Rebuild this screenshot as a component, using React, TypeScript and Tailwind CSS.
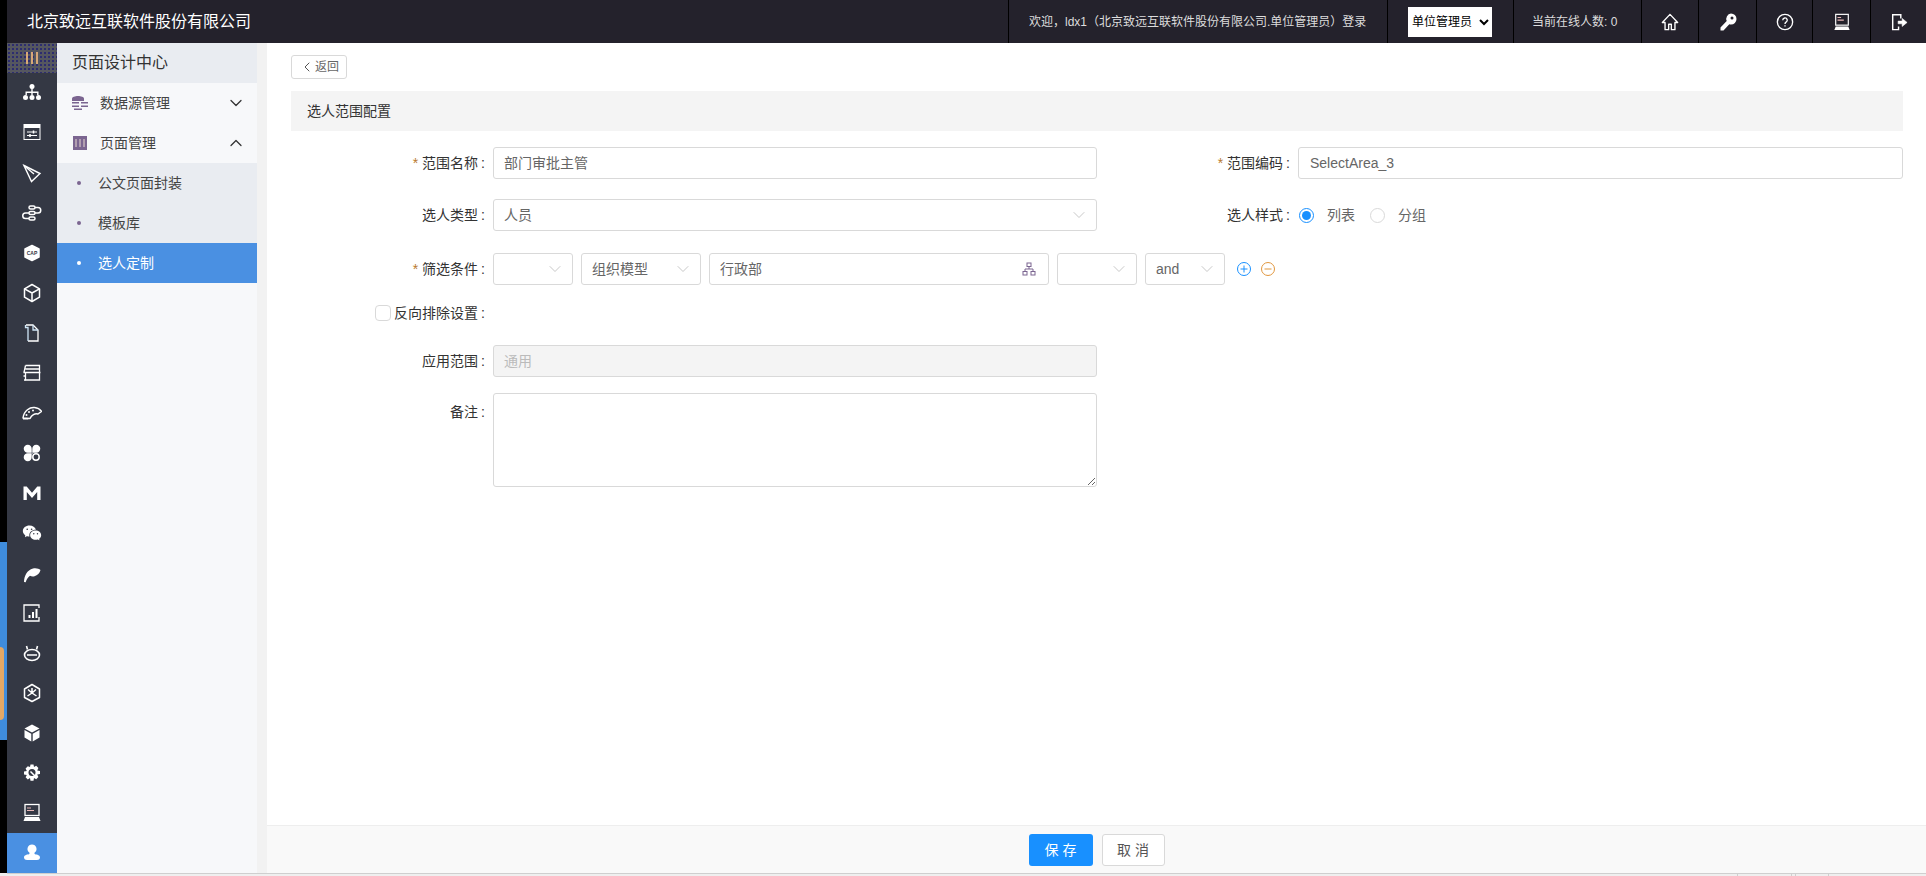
import { ChevronDown, ChevronLeft, ChevronUp } from 'lucide-react';
import { RiWechatFill } from 'react-icons/ri';
import type { ReactNode } from 'react';

const railIcons: ReactNode[] = [
  // org tree
  <g fill="#fff" key="a">
    <circle cx="10" cy="3.5" r="2.5" />
    <path d="M9.3 5h1.4v3.5h5.8V12h-1.4V10H10.7v2H9.3v-2H4.9v2H3.5V8.500h5.800z" />
    <circle cx="3.500" cy="14.500" r="2.500" />
    <circle cx="10" cy="14.500" r="2.500" />
    <circle cx="16.500" cy="14.500" r="2.500" />
  </g>,
  // settings card
  <g key="b">
    <rect x="1.500" y="1" width="17" height="16" fill="#fff" />
    <rect x="2.500" y="5" width="15" height="11" fill="#343844" />
    <path d="M5 9h10M5 12.500h10" stroke="#fff" strokeWidth="1.200" />
    <path d="M11.500 7.500v3M8 11v3" stroke="#fff" strokeWidth="1.500" />
  </g>,
  // paper plane
  <g key="c" fill="none" stroke="#fff" strokeWidth="1.400">
    <path d="M2 2.500 18 10.500 9.500 18.500z" />
    <path d="M2 2.500 12 11" />
  </g>,
  // flow
  <g key="d" fill="none" stroke="#fff" strokeWidth="1.500">
    <rect x="7" y="3" width="6" height="3" rx="1.500" />
    <rect x="7" y="8.500" width="6" height="3" rx="1.500" />
    <rect x="7" y="14" width="6" height="3" rx="1.500" />
    <path d="M13 4.500h3a2.500 2.500 0 0 1 0 5.500h-3M7 10H3.500a2.700 2.700 0 0 0 0 5.500H7" />
  </g>,
  // cap badge
  <g key="e">
    <path d="M10 2.500 17 6v8l-7 3.500L3 14V6z" fill="#fff" stroke="#fff" strokeLinejoin="round" strokeWidth="1.500" />
    <text x="10" y="11.800" textAnchor="middle" fontSize="5" fontWeight="700" fill="#343844" fontFamily="Liberation Sans, sans-serif">CAP</text>
  </g>,
  // box outline
  <g key="f" fill="none" stroke="#fff" strokeWidth="1.500" strokeLinejoin="round">
    <path d="M10 1.500 17.500 5.800v8.400L10 18.500l-7.500-4.300V5.800z" />
    <path d="M2.500 5.800 10 10l7.500-4.200M10 10v8.500" />
  </g>,
  // file
  <g key="g" fill="none" stroke="#fff" strokeWidth="1.300">
    <path d="M4 2h7l5 5v11H6" />
    <path d="M6 18V4.500H3.500V2M11 2v5h5" stroke="#cfe6f7" />
  </g>,
  // stacked storage
  <g key="h" fill="none" stroke="#fff" strokeWidth="1.300">
    <path d="M3.500 2.500h14v7h-14M1.500 9.500h17M3.500 9.500v7.500h14v-7.500" />
    <path d="M3.500 2.500 2 9.500M3.500 17h-1.500M1.500 13h2M17.500 6h-14" />
  </g>,
  // palette fan
  <g key="i">
    <path d="M1 15C2 7.500 8 4 12.500 4.500 15.500 4.800 18 6.200 19.500 8.300L16 11c-3-1-6.500 1-8 4.500z" fill="none" stroke="#fff" strokeWidth="1.500" strokeLinejoin="round" />
    <path d="M1 15h6l-.8 1.500H1z" fill="#fff" />
    <circle cx="7" cy="9" r="1" fill="#fff" />
    <circle cx="11" cy="7.500" r="1" fill="#fff" />
    <circle cx="4.500" cy="12" r="1" fill="#fff" />
  </g>,
  // clover
  <g key="j">
    <path d="M9.700 9.700H6a4 4 0 1 1 3.700-3.700zM10.300 9.700V6A4 4 0 1 1 14 9.700zM9.700 10.300V14A4 4 0 1 1 6 10.300z" fill="#fff" />
    <circle cx="14" cy="14" r="3.200" fill="none" stroke="#fff" strokeWidth="1.500" />
    <path d="M9 9h2v2H9z" fill="#9a9da6" />
  </g>,
  // M mark
  <path key="k" d="M1.500 3.500h3.200L10 9.800l5.300-6.300h3.200V17h-3.300V9L10 15 4.800 9v8H1.500z" fill="#fff" />,
  // wechat
  <g key="l" />,
  // feather
  <path key="m" d="M2 19c.2-6 3-12 9-13.500 3-.8 6 .2 7.500 1.500-.8 3-3 5.500-6 6.200-2 .5-3.500 0-4.500-.5-2 1.500-3.500 3.500-4.300 6.500z" fill="#fff" />,
  // report
  <g key="n">
    <path d="M17 14v4H2V2h15v3" fill="none" stroke="#fff" strokeWidth="1.300" />
    <path d="M6.500 12h2v3h-2zM10 9h2v6h-2zM13.500 6h2v9h-2z" fill="#fff" />
  </g>,
  // robot
  <g key="o" fill="none" stroke="#fff" strokeWidth="1.600">
    <ellipse cx="10" cy="12" rx="7.500" ry="5.500" />
    <path d="M5 12h10M5.500 6.500 4.500 3M14.500 6.500 15.500 3" />
  </g>,
  // hex snowflake
  <g key="p" fill="none" stroke="#fff" strokeWidth="1.500" strokeLinejoin="round">
    <path d="M10 1.500 17.500 6v8.500L10 18.500l-7.500-4V6z" />
    <path d="M10 10V5M10 10l4.500 3M10 10l-4.500 3M6 6.500l4 3.500 4-3.500" />
  </g>,
  // solid cube
  <g key="q">
    <path d="M10 1.500 17.500 5.500 10 9.500 2.500 5.500z" fill="#fff" />
    <path d="M2.500 7 9.300 10.700v7.800L2.500 14.500zM17.500 7l-6.800 3.700v7.800l6.800-4z" fill="#fff" />
  </g>,
  // gear with wrench
  <g key="r">
    <path d="M8.500 1.500h3l.5 2.500 2.200-1.200 2.200 2.200L15.200 7.500l2.800.5v3l-2.800.5 1.200 2.500-2.200 2.200-2.200-1.200-.5 2.800h-3L8 15l-2.200 1.500-2.200-2.200L4.800 12 2 11.500v-3l2.800-.5-1.200-2.500 2.200-2.200L8 4z" fill="#fff" />
    <circle cx="10" cy="9.500" r="3.500" fill="#343844" />
    <path d="M8.500 8.500l5 5" stroke="#fff" strokeWidth="1.500" />
  </g>,
  // laptop terminal
  <g key="s">
    <rect x="3" y="1.500" width="14" height="11" fill="none" stroke="#fff" strokeWidth="1.300" />
    <path d="M5 5h4M5 7.500h7" stroke="#e9b7b7" strokeWidth="1.200" />
    <path d="M3 14h14l1.500 4h-17z" fill="#fff" />
  </g>,
  // user
  <path key="t" d="M10 1.500a4.500 4.500 0 0 1 2.700 8.100c-.4.400-.4 1.400.3 1.700 2.300.5 5 .8 5 3.200 0 1.700-1.500 2.500-3 2.500H5c-1.500 0-3-.8-3-2.500 0-2.400 2.700-2.700 5-3.200.7-.3.700-1.300.3-1.700A4.500 4.500 0 0 1 10 1.500z" fill="#fff" />,
];

function Chevron() {
  return <ChevronDown className="w-5 h-5 text-[#bdbdbd]" strokeWidth={1} />;
}

function Field({ children, className = '' }: { children?: ReactNode; className?: string }) {
  return (
    <div className={`h-8 border border-[#d9d9d9] rounded-[3px] flex items-center justify-between pl-[10px] pr-[7px] text-[#666] ${className}`}>
      {children}
    </div>
  );
}

function Label({ text, required, className = '' }: { text: string; required?: boolean; className?: string }) {
  return (
    <div className={`h-8 flex items-center justify-end pr-2 text-[#333] whitespace-nowrap ${className}`}>
      {required && <span className="text-[#b97a2f] mr-1">*</span>}
      {text}
      <span className="ml-[3px]">:</span>
    </div>
  );
}

export default function App() {
  return (
    <div className="w-[1926px] h-[876px] flex overflow-hidden bg-[#efefef] text-sm font-['Liberation_Sans','Noto_Sans_CJK_SC',sans-serif]">
      {/* strip of the window behind */}
      <div className="w-[7px] h-[873px] shrink-0 bg-black flex flex-col pt-[542px]">
        <div className="h-[198px] bg-[#3f8cdc] pt-[105px]">
          <div className="h-[73px] w-1 bg-[#e2a765] rounded-r-sm" />
        </div>
      </div>

      <div className="flex-1 flex flex-col">
        <header className="h-[43px] shrink-0 bg-[#24222c] flex items-center text-white">
          <div className="w-[1001px] pl-5 text-base">北京致远互联软件股份有限公司</div>
          <div className="w-[379px] h-full border-l border-black flex items-center pl-5 text-xs text-[#ddd] whitespace-nowrap">
            欢迎，ldx1（北京致远互联软件股份有限公司.单位管理员）登录
          </div>
          <div className="w-[126px] h-full border-l border-black flex items-center pl-5">
            <select className="w-[84px] h-[30px] bg-white text-black text-xs">
              <option>单位管理员</option>
            </select>
          </div>
          <div className="w-[128px] h-full border-l border-black flex items-center pl-[18px] text-xs text-[#ddd] whitespace-nowrap">
            当前在线人数: 0
          </div>
          <div className="w-[57px] h-full border-l border-black flex items-center justify-center">
            <svg viewBox="0 0 20 20" className="w-[18px] h-[18px]" fill="none" stroke="#fff" strokeWidth="1.500">
              <path d="M10 1.500 1.500 10.500h3v8h4v-6h3v6h4v-8h3z" strokeLinejoin="round" />
            </svg>
          </div>
          <div className="w-[58px] h-full border-l border-black flex items-center justify-center">
            <svg viewBox="0 0 20 20" className="w-5 h-5" fill="#fff">
              <path d="M13 1.500a5.500 5.500 0 0 1 0 11c-.6 0-1.200-.1-1.700-.3L5.500 18.500H2.500v-3l6.200-6.400a5.500 5.500 0 0 1 4.300-7.600z" />
              <circle cx="14" cy="6" r="1.500" fill="#24222c" />
            </svg>
          </div>
          <div className="w-[56px] h-full border-l border-black flex items-center justify-center">
            <svg viewBox="0 0 20 20" className="w-[18px] h-[18px]" fill="none" stroke="#fff" strokeWidth="1.500">
              <circle cx="10" cy="10" r="8.500" />
              <path d="M7.500 8a2.500 2.500 0 1 1 3.700 2.200c-.8.500-1.200 1-1.200 2" />
              <path d="M10 13.500v1.500" />
            </svg>
          </div>
          <div className="w-[58px] h-full border-l border-black flex items-center justify-center">
            <svg viewBox="0 0 20 20" className="w-[18px] h-[18px]">
              <rect x="3" y="1.500" width="14" height="12" fill="none" stroke="#fff" strokeWidth="1.300" />
              <path d="M5 5h4M5 8h7" stroke="#e9b7b7" strokeWidth="1.300" />
              <path d="M3 15h14l1.500 4h-17z" fill="#fff" />
            </svg>
          </div>
          <div className="w-[56px] h-full border-l border-black flex items-center justify-center">
            <svg viewBox="0 0 20 20" className="w-[18px] h-[18px]" fill="none" stroke="#fff" strokeWidth="1.600">
              <path d="M12 6V2H3v16.500h6.500V15" />
              <path d="M9 9h4.500V6L19 10.500 13.500 15v-3H9z" fill="#fff" strokeWidth="0.600" />
            </svg>
          </div>
        </header>

        <div className="h-[830px] flex">
          {/* icon rail */}
          <nav className="w-[50px] shrink-0 bg-[#343844] flex flex-col">
            <div className="h-[30px] shrink-0 bg-[#55575f] bg-[radial-gradient(#2a2a70_0.7px,transparent_0.8px)] bg-[length:4px_4px] flex items-center justify-center gap-[3px]">
              <span className="w-0.5 h-3 bg-[#d8a878]" />
              <span className="w-0.5 h-3 bg-[#d8a878]" />
              <span className="w-0.5 h-3 bg-[#d8a878]" />
            </div>
            {railIcons.map((icon, i) => (
              <div key={i} className={`h-10 shrink-0 flex items-center justify-center ${i === 19 ? 'bg-[#4a90e2]' : ''}`}>
                {i === 11 ? (
                  <RiWechatFill className="w-5 h-5 text-white" />
                ) : (
                  <svg viewBox="0 0 20 20" className="w-5 h-5">{icon}</svg>
                )}
              </div>
            ))}
          </nav>

          {/* sub menu */}
          <aside className="w-[200px] shrink-0 bg-[#f7f8fa] text-[#444]">
            <div className="h-10 bg-[#e9ecf1] flex items-center pl-[15px] text-base text-[#333]">页面设计中心</div>
            <div className="h-10 flex items-center pl-[15px] pr-[11px]">
              <svg viewBox="0 0 16 14" className="w-4 h-[14px] mr-3">
                <path d="M0 2.500C0 1 3 0 6 0s6 1 6 2.500V5H0z" fill="#7b6590" />
                <path d="M0 6h7v1.500H0zM9 6h7v1.500H9zM0 9.500h7V11H0zM9 9.500h7V11H9zM2 12.500h8V14H2z" fill="#7b6590" />
              </svg>
              <span className="flex-1">数据源管理</span>
              <ChevronDown className="w-5 h-5 text-[#333]" strokeWidth={1.500} />
            </div>
            <div className="h-10 flex items-center pl-4 pr-[11px]">
              <svg viewBox="0 0 14 14" className="w-[14px] h-[14px] mr-[13px]">
                <rect width="14" height="14" fill="#7b6590" />
                <path d="M3 3v8M7 3v8M11 3v8" stroke="#e9d9d0" strokeWidth="1" />
              </svg>
              <span className="flex-1">页面管理</span>
              <ChevronUp className="w-5 h-5 text-[#333]" strokeWidth={1.500} />
            </div>
            <div className="h-10 bg-[#e9ecf1] flex items-center pl-[20px]">
              <span className="w-1 h-1 rounded-full bg-[#7b6590] mr-[17px]" />
              公文页面封装
            </div>
            <div className="h-10 bg-[#e9ecf1] flex items-center pl-[20px]">
              <span className="w-1 h-1 rounded-full bg-[#7b6590] mr-[17px]" />
              模板库
            </div>
            <div className="h-10 bg-[#4a90e2] text-white flex items-center pl-[20px]">
              <span className="w-1 h-1 rounded-full bg-white mr-[17px]" />
              选人定制
            </div>
          </aside>

          <div className="w-[10px] shrink-0 bg-[#f2f2f2]" />

          {/* main */}
          <main className="flex-1 bg-white flex flex-col">
            <div className="flex-1 pl-6 pt-3">
              <button className="w-[56px] h-6 border border-[#d9d9d9] rounded-[3px] flex items-center justify-center text-xs text-[#666]">
                <ChevronLeft className="w-4 h-4 text-[#555]" strokeWidth={1.500} />
                返回
              </button>
              <div className="mt-3 w-[1612px] h-10 bg-[#f4f4f4] flex items-center pl-4 text-[#333]">选人范围配置</div>

              <div className="mt-4 grid grid-cols-[202px_604px_201px_605px] items-start">
                <Label text="范围名称" required />
                <Field>部门审批主管</Field>
                <Label text="范围编码" required />
                <Field className="pl-[11px]">SelectArea_3</Field>
              </div>

              <div className="mt-5 grid grid-cols-[202px_604px_201px_605px] items-start">
                <Label text="选人类型" />
                <Field>
                  人员
                  <Chevron />
                </Field>
                <Label text="选人样式" />
                <div className="h-8 flex items-center pl-[1px] text-[#666]">
                  <span className="w-[15px] h-[15px] rounded-full border border-[#1890ff] flex items-center justify-center">
                    <span className="w-[9px] h-[9px] rounded-full bg-[#1890ff]" />
                  </span>
                  <span className="ml-[13px]">列表</span>
                  <span className="ml-[15px] w-[15px] h-[15px] rounded-full border border-[#d9d9d9]" />
                  <span className="ml-[13px]">分组</span>
                </div>
              </div>

              <div className="mt-[22px] flex items-center">
                <div className="w-[202px]">
                  <Label text="筛选条件" required />
                </div>
                <Field className="w-[80px]"><span /><Chevron /></Field>
                <Field className="w-[120px] ml-2">组织模型<Chevron /></Field>
                <Field className="w-[340px] ml-2">
                  行政部
                  <svg viewBox="0 0 14 14" className="w-[14px] h-[14px] mr-[5px]" fill="none" stroke="#7b6590" strokeWidth="1">
                    <rect x="5" y="1" width="4" height="3.500" />
                    <rect x="1" y="9.500" width="4" height="3.500" />
                    <rect x="9" y="9.500" width="4" height="3.500" />
                    <path d="M7 4.500V7M3 9.500V7h8v2.500" />
                  </svg>
                </Field>
                <Field className="w-[80px] ml-2"><span /><Chevron /></Field>
                <Field className="w-[80px] ml-2">and<Chevron /></Field>
                <svg viewBox="0 0 14 14" className="w-[14px] h-[14px] ml-3" fill="none" stroke="#1890ff" strokeWidth="1">
                  <circle cx="7" cy="7" r="6.500" />
                  <path d="M3.500 7h7M7 3.500v7" />
                </svg>
                <svg viewBox="0 0 14 14" className="w-[14px] h-[14px] ml-[10px]" fill="none" stroke="#e0973f" strokeWidth="1">
                  <circle cx="7" cy="7" r="6.500" />
                  <path d="M3.500 7h7" />
                </svg>
              </div>

              <div className="mt-5 flex items-center h-4">
                <div className="w-[202px] flex items-center justify-end pr-2 text-[#333] whitespace-nowrap">
                  <span className="w-4 h-4 border border-[#d9d9d9] rounded-sm mr-[3px]" />
                  反向排除设置
                  <span className="ml-[3px]">:</span>
                </div>
              </div>

              <div className="mt-6 grid grid-cols-[202px_604px]">
                <Label text="应用范围" />
                <Field className="bg-[#f4f4f4] text-[#bbb]">通用</Field>
              </div>

              <div className="mt-4 grid grid-cols-[202px_604px]">
                <Label text="备注" className="mt-[3px]" />
                <textarea className="h-[94px] border border-[#d9d9d9] rounded-[3px]" />
              </div>
            </div>

            <footer className="h-12 shrink-0 bg-[#f9f9f9] border-t border-[#eee] flex items-center justify-center gap-[9px]">
              <button className="w-[64px] h-8 bg-[#1890ff] rounded-[3px] text-white tracking-[4px] pl-1">保存</button>
              <button className="w-[63px] h-8 bg-white border border-[#d9d9d9] rounded-[3px] text-[#555] tracking-[4px] pl-1">取消</button>
            </footer>
          </main>
        </div>

        <div className="h-[3px] border-t border-[#cfcfcf] flex items-start gap-[3px] pl-[1730px]">
          <span className="w-[55px] h-[2px] border-x border-[#cfcfcf]" />
          <span className="w-[34px] h-[2px] border-x border-[#cfcfcf]" />
        </div>
      </div>
    </div>
  );
}
